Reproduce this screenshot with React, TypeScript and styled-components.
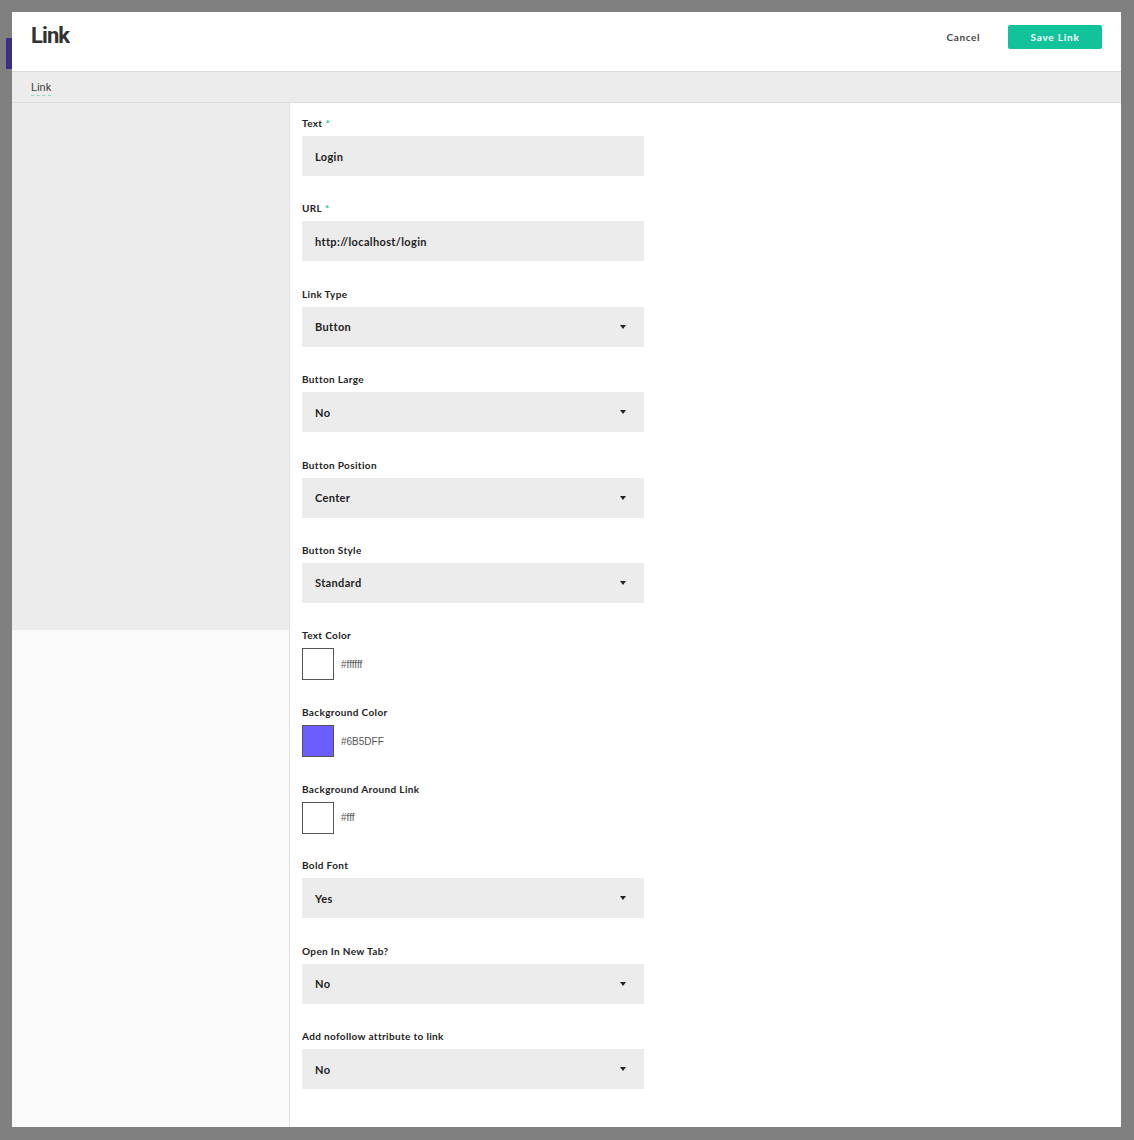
import styled, { createGlobalStyle } from "styled-components";

const GlobalStyle = createGlobalStyle`
  html, body {
    margin: 0;
    padding: 0;
    background: #808080;
  }
  * {
    box-sizing: border-box;
  }
`;

type SelectField = { kind: "select"; label: string; value: string; required?: boolean };
type TextField = { kind: "text"; label: string; value: string; required?: boolean };
type ColorField = { kind: "color"; label: string; value: string };
type Field = SelectField | TextField | ColorField;

const fields: Field[] = [
  { kind: "text", label: "Text", value: "Login", required: true },
  { kind: "text", label: "URL", value: "http://localhost/login", required: true },
  { kind: "select", label: "Link Type", value: "Button" },
  { kind: "select", label: "Button Large", value: "No" },
  { kind: "select", label: "Button Position", value: "Center" },
  { kind: "select", label: "Button Style", value: "Standard" },
  { kind: "color", label: "Text Color", value: "#ffffff" },
  { kind: "color", label: "Background Color", value: "#6B5DFF" },
  { kind: "color", label: "Background Around Link", value: "#fff" },
  { kind: "select", label: "Bold Font", value: "Yes" },
  { kind: "select", label: "Open In New Tab?", value: "No" },
  { kind: "select", label: "Add nofollow attribute to link", value: "No" },
];

const Backdrop = styled.div`
  position: relative;
  min-height: 1140px;
  padding: 12px 13px 13px 12px;
  background: #808080;
`;

// edge of the page sidebar peeking out behind the dialog
const PageEdge = styled.div`
  position: absolute;
  left: 6px;
  top: 38px;
  width: 6px;
  height: 31px;
  background: #3a2e86;
`;

const Modal = styled.div`
  display: flex;
  flex-direction: column;
  background: #fff;
  height: 1115px;
`;

const Header = styled.header`
  display: flex;
  align-items: flex-start;
  justify-content: space-between;
  height: 60px;
  padding: 13px 19px 0 19px;
  border-bottom: 1px solid #dcdcdc;
`;

const Title = styled.h1`
  margin: 0;
  font-family: Roboto, "Liberation Sans", sans-serif;
  font-size: 22px;
  line-height: 22px;
  font-weight: 700;
  letter-spacing: -0.9px;
  color: #333;
`;

const Actions = styled.div`
  display: flex;
  align-items: center;
  gap: 28px;
`;

const CancelButton = styled.button`
  border: 0;
  background: none;
  padding: 0;
  font-family: Lato, "Liberation Sans", sans-serif;
  font-size: 10px;
  font-weight: 700;
  letter-spacing: 0.6px;
  color: #444;
  cursor: pointer;
`;

const SaveButton = styled.button`
  width: 94px;
  height: 24px;
  border: 0;
  border-radius: 2px;
  background: #12c29b;
  color: #fff;
  font-family: Lato, "Liberation Sans", sans-serif;
  font-size: 10px;
  font-weight: 700;
  letter-spacing: 0.8px;
  cursor: pointer;
`;

const TabBar = styled.nav`
  display: flex;
  align-items: center;
  height: 31px;
  padding: 2px 19px 0;
  background: #ececec;
  border-bottom: 1px solid #dcdcdc;
`;

const Tab = styled.span`
  padding-bottom: 1px;
  font-family: Roboto, "Liberation Sans", sans-serif;
  font-size: 11px;
  color: #444;
  border-bottom: 1px dashed #8fd9c4;
`;

const Body = styled.div`
  flex: 1;
  display: flex;
  min-height: 0;
`;

const Sidebar = styled.aside`
  width: 278px;
  flex-shrink: 0;
  background: #fafafa;
  border-right: 1px solid #e2e2e2;
`;

const SidebarPanel = styled.div`
  height: 527px;
  background: #ececec;
`;

const Form = styled.form`
  flex: 1;
  padding: 14px 12px 0;
  display: flex;
  flex-direction: column;
`;

const FieldBlock = styled.div<{ $compact?: boolean }>`
  display: flex;
  flex-direction: column;
  gap: 6px;
  margin-bottom: ${(p) => (p.$compact ? "25.7px" : "26.4px")};
  width: 342px;
`;

const Label = styled.label`
  font-family: Lato, "Liberation Sans", sans-serif;
  font-size: 10px;
  font-weight: 700;
  line-height: 13px;
  letter-spacing: 0.35px;
  color: #222;
`;

const Required = styled.span`
  margin-left: 3px;
  color: #12c29b;
`;

const InputBox = styled.div`
  display: flex;
  align-items: center;
  justify-content: space-between;
  height: 40px;
  padding: 0 18px 0 13px;
  background: #ececec;
  font-family: Lato, "Liberation Sans", sans-serif;
  font-size: 11px;
  font-weight: 700;
  letter-spacing: 0.35px;
  color: #222;
`;

const Caret = styled.span`
  width: 0;
  height: 0;
  border-left: 3.5px solid transparent;
  border-right: 3.5px solid transparent;
  border-top: 4px solid #222;
`;

const ColorRow = styled.div`
  display: flex;
  align-items: center;
  gap: 7px;
`;

const Swatch = styled.span<{ $color: string }>`
  width: 32px;
  height: 32px;
  background: ${(p) => p.$color};
  border: 1px solid #555;
`;

const HexText = styled.span`
  font-family: "Liberation Sans Narrow", "Liberation Sans", sans-serif;
  font-size: 10px;
  color: #555;
`;

function FieldView({ field }: { field: Field }) {
  if (field.kind === "color") {
    return (
      <FieldBlock $compact>
        <Label>{field.label}</Label>
        <ColorRow>
          <Swatch $color={field.value} />
          <HexText>{field.value}</HexText>
        </ColorRow>
      </FieldBlock>
    );
  }
  return (
    <FieldBlock>
      <Label>
        {field.label}
        {field.required && <Required>*</Required>}
      </Label>
      <InputBox>
        <span>{field.value}</span>
        {field.kind === "select" && <Caret />}
      </InputBox>
    </FieldBlock>
  );
}

export default function App() {
  return (
    <>
      <GlobalStyle />
      <Backdrop>
        <PageEdge />
        <Modal>
          <Header>
            <Title>Link</Title>
            <Actions>
              <CancelButton>Cancel</CancelButton>
              <SaveButton>Save Link</SaveButton>
            </Actions>
          </Header>
          <TabBar>
            <Tab>Link</Tab>
          </TabBar>
          <Body>
            <Sidebar>
              <SidebarPanel />
            </Sidebar>
            <Form>
              {fields.map((f) => (
                <FieldView key={f.label} field={f} />
              ))}
            </Form>
          </Body>
        </Modal>
      </Backdrop>
    </>
  );
}
